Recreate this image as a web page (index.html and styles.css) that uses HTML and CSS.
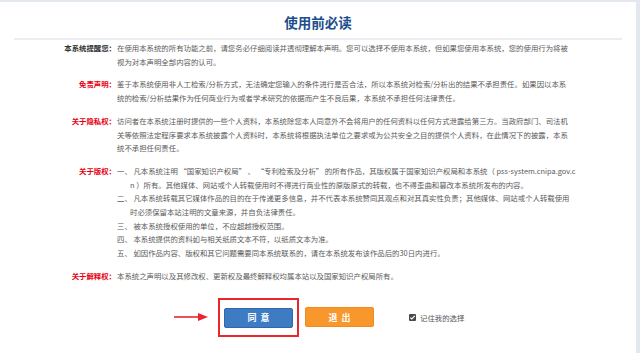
FILE: index.html
```html
<!DOCTYPE html>
<html>
	<head>
		<meta charset="UTF-8">
		<title>使用前必读</title>
		<link rel="stylesheet" href="styles.css">
	</head>
	<body>
		<div class="panel">
			<h1 class="title">使用前必读</h1>
			<div class="notice">
				<div class="item">
					<span class="label">本系统提醒您：</span>
					<p class="text">在使用本系统的所有功能之前，请您务必仔细阅读并透彻理解本声明。您可以选择不使用本系统，但如果您使用本系统，您的使用行为将被<br>视为对本声明全部内容的认可。</p>
				</div>
				<div class="item">
					<span class="label red">免责声明：</span>
					<p class="text">鉴于本系统使用非人工检索/分析方式，无法确定您输入的条件进行是否合法，所以本系统对检索/分析出的结果不承担责任。如果因以本系<br>统的检索/分析结果作为任何商业行为或者学术研究的依据而产生不良后果，本系统不承担任何法律责任。</p>
				</div>
				<div class="item">
					<span class="label red">关于隐私权：</span>
					<p class="text">访问者在本系统注册时提供的一些个人资料，本系统除您本人同意外不会将用户的任何资料以任何方式泄露给第三方。当政府部门、司法机<br>关等依照法定程序要求本系统披露个人资料时，本系统将根据执法单位之要求或为公共安全之目的提供个人资料，在此情况下的披露，本系<br>统不承担任何责任。</p>
				</div>
				<div class="item">
					<span class="label red">关于版权：</span>
					<ol class="text list">
						<li>一、 凡本系统注明 “国家知识产权局” 、 “专利检索及分析” 的所有作品，其版权属于国家知识产权局和本系统（ pss-system.cnipa.gov.c<br>n ）所有。其他媒体、网站或个人转载使用时不得进行商业性的原版原式的转载，也不得歪曲和篡改本系统所发布的内容。</li>
						<li>二、 凡本系统转载其它媒体作品的目的在于传递更多信息，并不代表本系统赞同其观点和对其真实性负责；其他媒体、网站或个人转载使用<br>时必须保留本站注明的文章来源，并自负法律责任。</li>
						<li>三、 被本系统授权使用的单位，不应超越授权范围。</li>
						<li>四、 本系统提供的资料如与相关纸质文本不符，以纸质文本为准。</li>
						<li>五、 如因作品内容、版权和其它问题需要同本系统联系的，请在本系统发布该作品后的30日内进行。</li>
					</ol>
				</div>
				<div class="item">
					<span class="label red">关于解释权：</span>
					<p class="text">本系统之声明以及其修改权、更新权及最终解释权均属本站以及国家知识产权局所有。</p>
				</div>
			</div>
			<div class="actions">
				<svg class="arrow" width="34" height="8" viewBox="0 0 34 8">
					<line x1="0" y1="4" x2="27" y2="4" stroke="#e8262b" stroke-width="1.6"/>
					<polygon points="24,0 34,4 24,8" fill="#e8262b"/>
				</svg>
				<div class="mark">
					<button class="btn agree" type="button">同意</button>
				</div>
				<button class="btn quit" type="button">退出</button>
				<label class="remember">
					<span class="box"><svg width="7" height="7" viewBox="0 0 7 7"><polyline points="1.3,3.6 2.8,5 5.7,1.8" fill="none" stroke="#fff" stroke-width="1.2"/></svg></span>
					记住我的选择
				</label>
			</div>
		</div>
	</body>
</html>
```

FILE: styles.css
```css
* {
	font-family: "Noto Sans CJK SC", "Liberation Sans", sans-serif;
}
html, body {
	height: 100%;
	margin: 0;
	padding: 0;
}
body {
	background: #e3e7ee;
}

.panel {
	background: #fff;
	box-sizing: border-box;
	height: calc(100% - 2px);
	margin: 2px 4px 0 0;
	overflow: hidden;
}
.title {
	border-bottom: 2px solid #eceef3;
	color: #1c4d8c;
	font-size: 13.5px;
	font-weight: bold;
	line-height: 20px;
	margin: 0 14px;
	padding: 10px 0 6px 0;
	text-align: center;
}

.notice {
	color: #5a5a5a;
	font-size: 7.4px;
	line-height: 13.7px;
	padding-top: 1px;
}
.item {
	display: grid;
	grid-template-columns: 116px 1fr;
	margin-bottom: 9px;
}
.label {
	color: #333;
	font-weight: bold;
	text-align: right;
}
.red {
	color: #e60012;
}
.text {
	margin: 0;
	padding-left: 1px;
	white-space: nowrap;
}
.list {
	list-style: none;
	padding-left: 0;
}
.list li {
	padding-left: 14px;
	text-indent: -13px;
}

.actions {
	align-items: center;
	display: flex;
	margin-top: 15px;
	padding-left: 174px;
}
.arrow {
	margin-right: 10px;
}
.mark {
	border: 2px solid #e8262b;
	padding: 8px 4px 7px 4px;
}
.btn {
	border: 1px solid;
	border-radius: 2px;
	color: #fff;
	cursor: pointer;
	font-size: 9px;
	font-weight: bold;
	height: 20px;
	letter-spacing: 4px;
	padding: 0 0 0 4px;
	width: 69px;
}
.agree {
	background: #3d7cc3;
	border-color: #3068aa;
	display: block;
}
.quit {
	background: #f8982c;
	border-color: #f08b1d;
	margin-left: 6px;
}
.remember {
	align-items: center;
	color: #555;
	display: flex;
	font-size: 7.4px;
	gap: 4px;
	margin-left: 35px;
}
.box {
	background: #4a4a4a;
	border-radius: 1px;
	display: flex;
	height: 7px;
	width: 7px;
}
```
